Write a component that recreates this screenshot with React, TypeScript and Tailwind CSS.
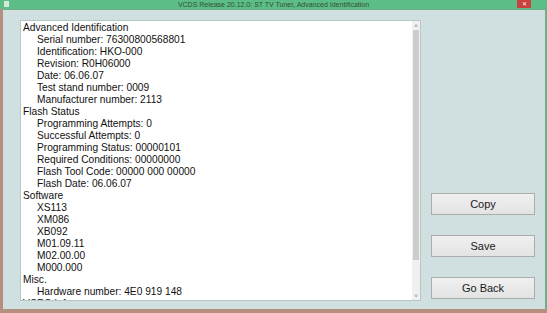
import React from 'react';

const sections: { title: string; items: string[] }[] = [
  {
    title: 'Advanced Identification',
    items: [
      'Serial number: 76300800568801',
      'Identification: HKO-000',
      'Revision: R0H06000',
      'Date: 06.06.07',
      'Test stand number: 0009',
      'Manufacturer number: 2113',
    ],
  },
  {
    title: 'Flash Status',
    items: [
      'Programming Attempts: 0',
      'Successful Attempts: 0',
      'Programming Status: 00000101',
      'Required Conditions: 00000000',
      'Flash Tool Code: 00000 000 00000',
      'Flash Date: 06.06.07',
    ],
  },
  {
    title: 'Software',
    items: ['XS113', 'XM086', 'XB092', 'M01.09.11', 'M02.00.00', 'M000.000'],
  },
  {
    title: 'Misc.',
    items: ['Hardware number: 4E0 919 148'],
  },
  {
    title: 'VCDS Info',
    items: [],
  },
];

const Button: React.FC<{ label: string }> = ({ label }) => (
  <button className="h-[22px] w-[104px] border border-[#acacac] bg-gradient-to-b from-[#f0f0f0] to-[#e3e3e3] text-[11px] text-[#1a1a1a]">
    {label}
  </button>
);

export default function App() {
  return (
    <div
      className="flex h-[313px] w-[547px] flex-col overflow-hidden bg-[#b4917f]"
      style={{ fontFamily: '"Liberation Sans", Arial, sans-serif' }}
    >
      {/* title bar */}
      <div className="relative flex h-[10px] items-center justify-center bg-[#5dbd86]">
        <span className="absolute left-[4px] top-[1px] h-[6px] w-[5px] bg-[#d8e8d8]" />
        <span className="text-[7px] leading-none text-[#2f4f3a]">
          VCDS Release 20.12.0: ST TV Tuner,  Advanced Identification
        </span>
        <span className="absolute right-[16px] top-0 flex h-[8px] w-[14px] items-center justify-center bg-[#c9403e] text-[6px] leading-none text-white">
          ✕
        </span>
      </div>

      <div className="mb-[4px] ml-[3px] flex flex-1 border-t border-r-[2px] border-[#6fae8a] bg-[#d0dfdf]">
        {/* text box */}
        <div className="ml-[17px] mt-[10px] mb-[8px] flex h-[281px] w-[401px] border border-[#b9c6c6] bg-white">
          <div className="h-full flex-1 overflow-hidden pl-[2px] pt-[1px] text-[10.2px] leading-[12px] text-[#111]">
            {sections.map((s) => (
              <div key={s.title}>
                <div>{s.title}</div>
                {s.items.map((it) => (
                  <div key={it} className="pl-[14px]">
                    {it}
                  </div>
                ))}
              </div>
            ))}
          </div>
          <div className="flex h-full w-[8px] flex-col bg-[#f0f0f0]">
            <div className="flex h-[9px] items-center justify-center text-[6px] leading-none text-[#606060]">˄</div>
            <div className="mx-[1px] h-[230px] bg-[#cdcdcd]" />
            <div className="flex-1" />
            <div className="flex h-[9px] items-center justify-center text-[6px] leading-none text-[#606060]">˅</div>
          </div>
        </div>

        {/* buttons */}
        <div className="ml-[10px] flex flex-col gap-[20px] pt-[183px]">
          <Button label="Copy" />
          <Button label="Save" />
          <Button label="Go Back" />
        </div>
      </div>
    </div>
  );
}
